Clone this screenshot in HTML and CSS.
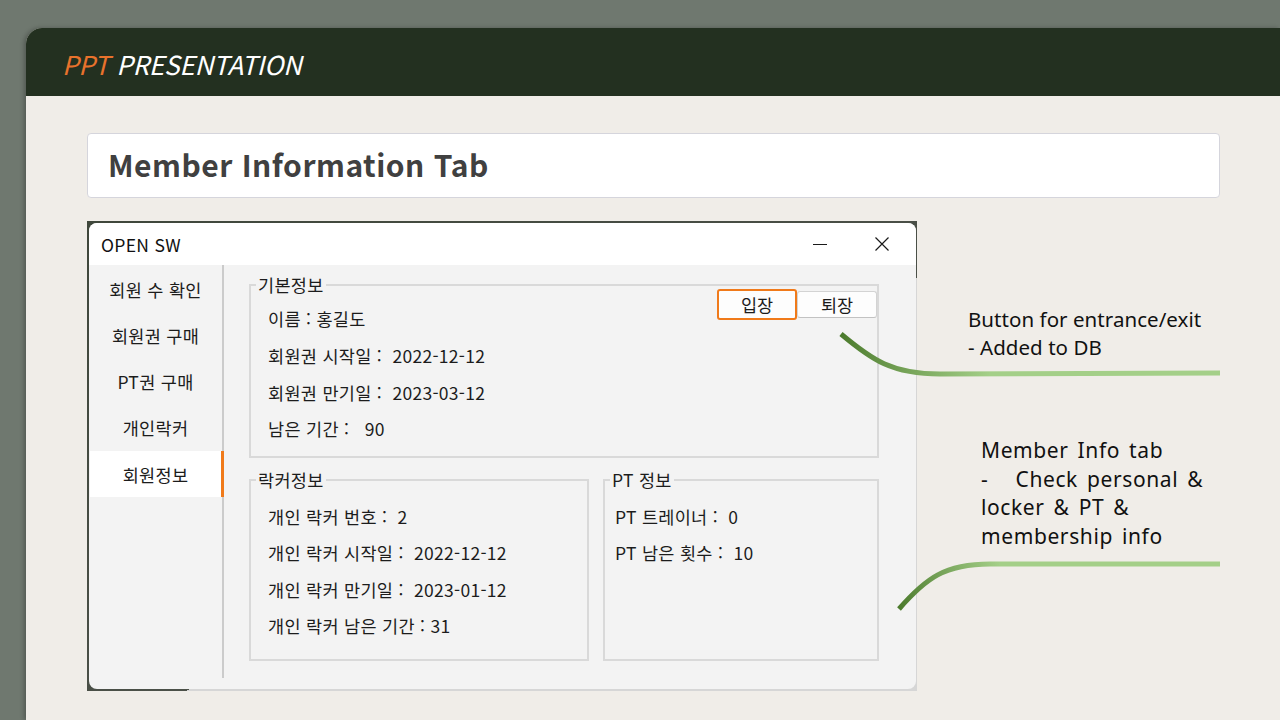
FILE: index.html
```html
<!DOCTYPE html>
<html lang="ko">
<head>
<meta charset="utf-8">
<title>Member Information Tab</title>
<link rel="stylesheet" href="styles.css">
</head>
<body>
<div class="slide">
  <header class="slide-head"><span class="accent">PPT</span> PRESENTATION</header>
  <main class="slide-body">
    <div class="title-box"><h1>Member Information Tab</h1></div>
    <div class="stage">
      <div class="shot">
        <div class="win">
          <div class="titlebar">
            <span class="win-title">OPEN SW</span>
            <div class="ctrls">
              <svg width="14" height="14" viewBox="0 0 14 14"><path d="M0 7.5H14" stroke="#1a1a1a" stroke-width="1.2"/></svg>
              <svg width="14" height="14" viewBox="0 0 14 14"><path d="M0.5 0.5L13.5 13.5M13.5 0.5L0.5 13.5" stroke="#1a1a1a" stroke-width="1.2"/></svg>
            </div>
          </div>
          <div class="win-body">
            <nav class="nav">
              <div class="nav-item">회원 수 확인</div>
              <div class="nav-item">회원권 구매</div>
              <div class="nav-item">PT권 구매</div>
              <div class="nav-item">개인락커</div>
              <div class="nav-item active">회원정보</div>
            </nav>
            <div class="panel">
              <fieldset class="grp grp-basic">
                <legend>기본정보</legend>
                <div class="basic-inner">
                  <div class="lines lines-basic">
                    <div class="line">이름 : 홍길도</div>
                    <div class="line">회원권 시작일 :&nbsp; 2022-12-12</div>
                    <div class="line">회원권 만기일 :&nbsp; 2023-03-12</div>
                    <div class="line">남은 기간 :&nbsp;&nbsp; 90</div>
                  </div>
                  <div class="btns">
                    <button class="btn btn-primary">입장</button>
                    <button class="btn">퇴장</button>
                  </div>
                </div>
              </fieldset>
              <div class="row2">
                <fieldset class="grp grp-locker">
                  <legend>락커정보</legend>
                  <div class="lines lines-small">
                    <div class="line">개인 락커 번호 :&nbsp; 2</div>
                    <div class="line">개인 락커 시작일 :&nbsp; 2022-12-12</div>
                    <div class="line">개인 락커 만기일 :&nbsp; 2023-01-12</div>
                    <div class="line">개인 락커 남은 기간 : 31</div>
                  </div>
                </fieldset>
                <fieldset class="grp grp-pt">
                  <legend>PT 정보</legend>
                  <div class="lines lines-small lines-pt">
                    <div class="line">PT 트레이너 :&nbsp; 0</div>
                    <div class="line">PT 남은 횟수 :&nbsp; 10</div>
                  </div>
                </fieldset>
              </div>
            </div>
          </div>
        </div>
      </div>
      <div class="notes">
        <p class="note note1">Button for entrance/exit<br>- Added to DB</p>
        <p class="note note2">Member Info tab<br>-&nbsp;&nbsp; Check personal &amp;<br>locker &amp; PT &amp;<br>membership info</p>
      </div>
    </div>
  </main>
</div>
<svg class="arrows" width="1280" height="720" viewBox="0 0 1280 720">
  <defs>
    <linearGradient id="g1" gradientUnits="userSpaceOnUse" x1="840" y1="333" x2="990" y2="373">
      <stop offset="0" stop-color="#4b7a2c"/>
      <stop offset="1" stop-color="#a4cf88"/>
    </linearGradient>
    <linearGradient id="g2" gradientUnits="userSpaceOnUse" x1="899" y1="610" x2="1000" y2="564">
      <stop offset="0" stop-color="#4b7a2c"/>
      <stop offset="1" stop-color="#a4cf88"/>
    </linearGradient>
  </defs>
  <path d="M841 334 C872 360 892 374 940 374 L1220 373" fill="none" stroke="url(#g1)" stroke-width="5"/>
  <path d="M899 609 C926 578 945 564 990 564 L1220 564" fill="none" stroke="url(#g2)" stroke-width="5"/>
</svg>
</body>
</html>
```

FILE: styles.css
```css
html, body {
  margin: 0;
  padding: 0;
}
body {
  background: #6f786f;
  width: 1280px;
  height: 720px;
  overflow: hidden;
  position: relative;
  font-family: "Noto Sans CJK KR", "Noto Sans", sans-serif;
}
.slide {
  margin: 28px 0 0 26px;
  width: 1254px;
  height: 692px;
  background: #f0ede8;
  border-top-left-radius: 16px;
  overflow: hidden;
  box-shadow: -2px 0 4px rgba(0,0,0,0.25);
}
.slide-head {
  height: 68px;
  background: #233020;
  box-sizing: border-box;
  padding-left: 36px;
  line-height: 72px;
  font-size: 26px;
  font-style: italic;
  color: #ffffff;
  letter-spacing: -0.2px;
}
.accent {
  color: #e8722c;
}
.slide-body {
  padding: 37px 0 0 61px;
}
.title-box {
  width: 1133px;
  height: 65px;
  box-sizing: border-box;
  background: #ffffff;
  border: 1px solid #d5d5dc;
  border-radius: 4px;
  display: flex;
  align-items: center;
  padding-left: 20px;
  padding-bottom: 3px;
}
.title-box h1 {
  margin: 0;
  font-size: 30px;
  font-weight: 700;
  color: #404040;
  letter-spacing: 0.5px;
}
.stage {
  margin-top: 23px;
  display: flex;
  align-items: flex-start;
}
.shot {
  width: 830px;
  height: 470px;
  box-sizing: border-box;
  padding: 2px 1px 2px 2px;
  background: linear-gradient(to bottom right, #3f473b 0%, #4b5048 56%, #d6d6d6 56%, #d6d6d6 100%);
}
.win {
  height: 100%;
  background: #f3f3f3;
  border-radius: 8px;
  overflow: hidden;
  color: #1c1c1c;
  font-size: 17.5px;
  letter-spacing: 0.3px;
}
.titlebar {
  height: 42px;
  background: #ffffff;
  display: flex;
  align-items: center;
  justify-content: space-between;
  padding: 0 27px 0 12px;
}
.win-title {
  font-size: 17.5px;
  color: #111;
}
.ctrls {
  display: flex;
  gap: 48px;
  align-items: center;
}
.ctrls svg {
  display: block;
}
.win-body {
  display: grid;
  grid-template-columns: 135px 1fr;
  align-items: start;
}
.nav {
  height: 413px;
  box-sizing: border-box;
  border-right: 2px solid #cbcbcb;
  padding-top: 1px;
}
.nav-item {
  height: 46.25px;
  display: flex;
  align-items: center;
  justify-content: center;
  font-size: 17.5px;
  color: #1c1c1c;
}
.nav-item.active {
  background: #ffffff;
  margin-left: 1px;
  margin-right: -2px;
  border-right: 3px solid #f07a1a;
}
.panel {
  padding: 10px 37px 0 25px;
}
.grp {
  margin: 0;
  padding: 0;
  border: 2px solid #d9d9d9;
  box-sizing: border-box;
  min-width: 0;
}
.grp legend {
  font-size: 17.5px;
  line-height: 20px;
  padding: 0 2px;
  margin-left: 5px;
  color: #1c1c1c;
}
.grp-basic {
  height: 183px;
}
.basic-inner {
  display: flex;
  justify-content: space-between;
  align-items: flex-start;
}
.lines-basic {
  padding-left: 17px;
  margin-top: 6px;
}
.lines-basic .line {
  height: 36.8px;
  line-height: 36.8px;
}
.btns {
  display: flex;
  align-items: center;
  margin-top: -6px;
}
.btn {
  font-family: "Noto Sans CJK KR", "Noto Sans", sans-serif;
  font-size: 17.5px;
  color: #1c1c1c;
  width: 80px;
  height: 27px;
  padding: 0;
  background: #fdfdfd;
  border: 1px solid #d3d3d3;
  border-bottom-color: #c2c2c2;
  border-radius: 3px;
  display: flex;
  align-items: center;
  justify-content: center;
}
.btn-primary {
  height: 31px;
  border: 2px solid #f07a1a;
  border-radius: 3px;
}
.row2 {
  margin-top: 12px;
  display: flex;
  gap: 14px;
}
.grp-locker {
  width: 340px;
  height: 191px;
}
.grp-pt {
  width: 276px;
  height: 191px;
}
.lines-small {
  padding-left: 17px;
  margin-top: 9px;
}
.lines-small .line {
  height: 36.3px;
  line-height: 36.3px;
}
.lines-pt {
  padding-left: 10px;
}
.notes {
  padding-top: 84px;
}
.note {
  margin: 0;
  font-family: "Noto Sans", "Open Sans", sans-serif;
  font-size: 20.5px;
  color: #111;
  line-height: 28px;
  letter-spacing: 0.05px;
}
.note1 {
  margin-left: 51px;
}
.note2 {
  margin-left: 64px;
  margin-top: 75px;
  font-size: 21px;
  line-height: 28.7px;
  letter-spacing: 0.6px;
  word-spacing: 3px;
}
.arrows {
  position: absolute;
  left: 0;
  top: 0;
  pointer-events: none;
}
```
